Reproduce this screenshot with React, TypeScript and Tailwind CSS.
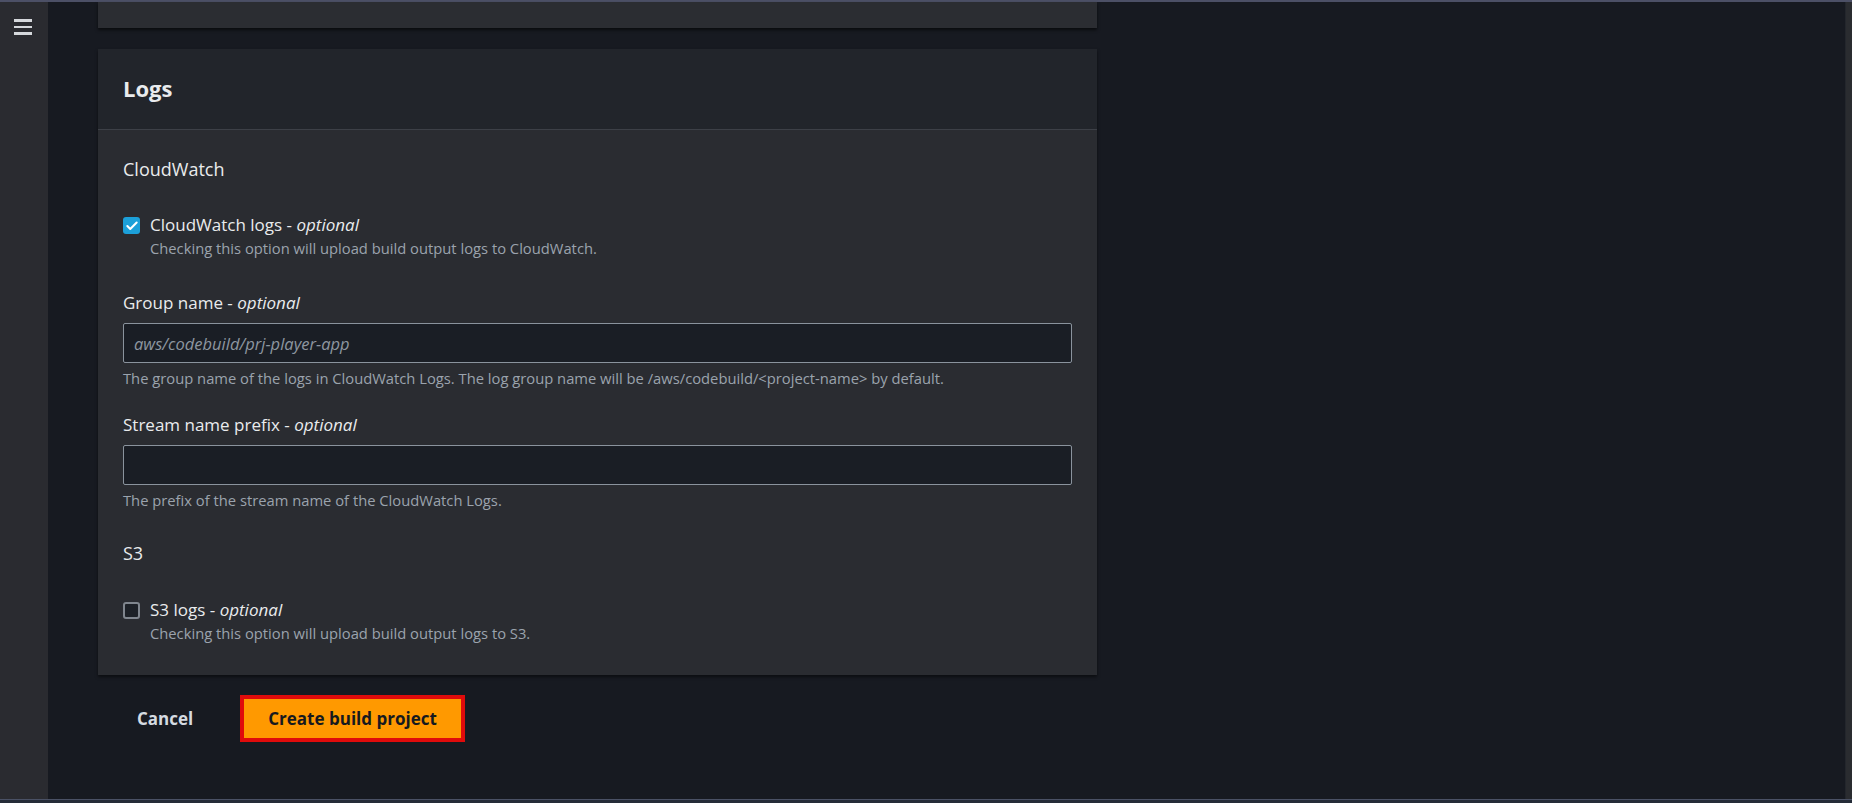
import { Check } from 'lucide-react';

const font = { fontFamily: '"Open Sans", "Liberation Sans", sans-serif' };

const Checkbox = ({ checked }: { checked: boolean }) => (
  <span
    className={`mt-[3px] flex h-[17px] w-[17px] shrink-0 items-center justify-center rounded-[3px] ${
      checked ? 'bg-[#1ca0d9]' : 'border-2 border-[#80868e] bg-[#1d2127]'
    }`}
  >
    {checked && <Check size={14} strokeWidth={3.5} className="text-white" />}
  </span>
);

const CheckRow = ({ checked, label, desc }: { checked: boolean; label: string; desc: string }) => (
  <div className="flex items-start gap-[10px]">
    <Checkbox checked={checked} />
    <div>
      <div className="text-[17px] leading-[22px] text-[#e9ebed]">
        {label} - <i>optional</i>
      </div>
      <div className="mt-[2px] text-[14.75px] leading-[20px] text-[#9ba3ad]">{desc}</div>
    </div>
  </div>
);

const Field = ({ label, placeholder, help }: { label: string; placeholder?: string; help: string }) => (
  <div>
    <div className="text-[17px] leading-[22px] text-[#e9ebed]">
      {label} - <i>optional</i>
    </div>
    <input
      type="text"
      placeholder={placeholder}
      style={font}
      className="mt-[9px] block h-[40px] w-full rounded-[2px] border border-[#8a939d] bg-[#1a1e25] px-[10px] text-[16.5px] italic text-[#e9ebed] placeholder:text-[#8d96a0] focus:outline-none"
    />
    <div className="mt-[6px] text-[14.75px] leading-[18px] text-[#9ba3ad]">{help}</div>
  </div>
);

const App = () => {
  return (
    <div style={font} className="flex h-[803px] w-full flex-col overflow-hidden bg-[#171a21]">
      <div className="h-[2px] w-full bg-[#4c5066]" />
      <div className="flex min-h-0 flex-1">
        <aside className="w-[48px] shrink-0 bg-[#2a2b30] pt-[17px]">
          <div className="ml-[14px] flex w-[18px] flex-col gap-[4px]">
            <span className="h-[2.5px] w-full bg-[#d5d8dc]" />
            <span className="h-[2.5px] w-full bg-[#d5d8dc]" />
            <span className="h-[2.5px] w-full bg-[#d5d8dc]" />
          </div>
        </aside>

        <main className="flex-1 pl-[50px]">
          <div className="w-[999px]">
            <div className="h-[26px] bg-[#2b2d32] shadow-[0_2px_3px_rgba(0,0,0,0.6)]" />

            <section className="mt-[21px] bg-[#2a2c31] shadow-[0_2px_3px_rgba(0,0,0,0.5)]">
              <div className="border-b border-[#3d4047] bg-[#22252b] px-[25px] pb-[27px] pt-[25px]">
                <h2 className="text-[22px] font-bold leading-[28px] text-[#e9ebed]">Logs</h2>
              </div>

              <div className="px-[25px] pb-[32px] pt-[28px]">
                <div className="text-[18px] leading-[22px] text-[#e9ebed]">CloudWatch</div>
                <div className="mt-[34px]">
                  <CheckRow
                    checked
                    label="CloudWatch logs"
                    desc="Checking this option will upload build output logs to CloudWatch."
                  />
                </div>

                <div className="mt-[34px]">
                  <Field
                    label="Group name"
                    placeholder="aws/codebuild/prj-player-app"
                    help="The group name of the logs in CloudWatch Logs. The log group name will be /aws/codebuild/<project-name> by default."
                  />
                </div>

                <div className="mt-[27px]">
                  <Field label="Stream name prefix" help="The prefix of the stream name of the CloudWatch Logs." />
                </div>

                <div className="mt-[33px] text-[18px] leading-[22px] text-[#e9ebed]">S3</div>
                <div className="mt-[35px]">
                  <CheckRow checked={false} label="S3 logs" desc="Checking this option will upload build output logs to S3." />
                </div>
              </div>
            </section>

            <div className="mt-[20px] flex items-center">
              <button className="ml-[39px] text-[17px] font-bold text-[#d5dbe1]">Cancel</button>
              <button className="ml-[47px] border-4 border-[#e00b0b] bg-[#ff9900] px-[24px] py-[7px] text-[17px] font-bold leading-[25px] text-[#16191f]">
                Create build project
              </button>
            </div>
          </div>
        </main>

        <div className="w-[7px] shrink-0 border-l border-[#23262c] bg-[#2a2c30]" />
      </div>
      <div className="h-[1px] w-full bg-[#4a5165]" />
      <div className="h-[3px] w-full bg-[#252c38]" />
    </div>
  );
};

export default App;
